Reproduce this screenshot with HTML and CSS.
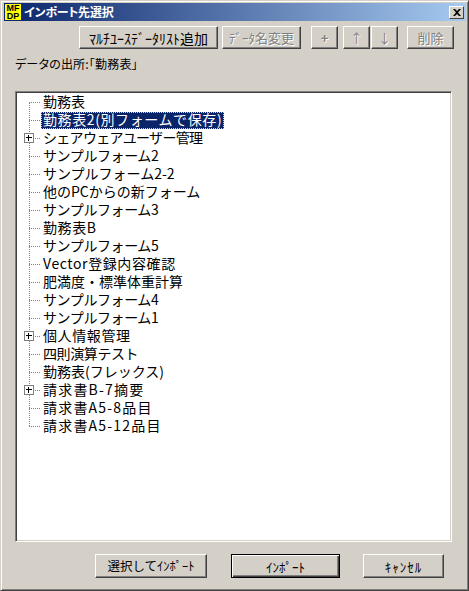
FILE: index.html
```html
<!DOCTYPE html>
<html lang="ja">
  <head>
    <meta charset="UTF-8" />
    <title>インポート先選択</title>
    <link rel="stylesheet" href="styles.css">
  </head>
  <body>
    <div class="window">
      <div class="titlebar">
        <div class="app-icon"><span>MF</span><span>DP</span></div>
        <span class="title">インポート先選択</span>
        <button type="button" class="close">
          <svg width="8" height="7" viewBox="0 0 8 7"><path d="M0 0h2l2 2 2-2h2L5 3.5 8 7H6L4 5 2 7H0l3-3.5z" fill="#000"/></svg>
        </button>
      </div>

      <div class="toolbar">
        <button type="button" class="btn multi">ﾏﾙﾁﾕｰｽﾃﾞｰﾀﾘｽﾄ追加</button>
        <button type="button" class="btn rename" disabled>ﾃﾞｰﾀ名変更</button>
        <button type="button" class="btn plus" disabled>+</button>
        <button type="button" class="btn up" disabled>↑</button>
        <button type="button" class="btn down" disabled>↓</button>
        <button type="button" class="btn remove" disabled>削除</button>
      </div>

      <p class="source">データの出所:「勤務表」</p>

      <ul class="tree">
        <li><span class="branch"></span><span class="label">勤務表</span></li>
        <li><span class="branch"></span><span class="label selected">勤務表2(別フォームで保存)</span></li>
        <li><span class="branch"></span><span class="expander"></span><span class="label tighter">シェアウェアユーザー管理</span></li>
        <li><span class="branch"></span><span class="label tight">サンプルフォーム2</span></li>
        <li><span class="branch"></span><span class="label">サンプルフォーム2-2</span></li>
        <li><span class="branch"></span><span class="label">他のPCからの新フォーム</span></li>
        <li><span class="branch"></span><span class="label tight">サンプルフォーム3</span></li>
        <li><span class="branch"></span><span class="label loose">勤務表B</span></li>
        <li><span class="branch"></span><span class="label tight">サンプルフォーム5</span></li>
        <li><span class="branch"></span><span class="label loose">Vector登録内容確認</span></li>
        <li><span class="branch"></span><span class="label">肥満度・標準体重計算</span></li>
        <li><span class="branch"></span><span class="label tight">サンプルフォーム4</span></li>
        <li><span class="branch"></span><span class="label tight">サンプルフォーム1</span></li>
        <li><span class="branch"></span><span class="expander"></span><span class="label loose">個人情報管理</span></li>
        <li><span class="branch"></span><span class="label tight">四則演算テスト</span></li>
        <li><span class="branch"></span><span class="label">勤務表(フレックス)</span></li>
        <li><span class="branch"></span><span class="expander"></span><span class="label looser">請求書B-7摘要</span></li>
        <li><span class="branch"></span><span class="label looser">請求書A5-8品目</span></li>
        <li><span class="branch"></span><span class="label looser">請求書A5-12品目</span></li>
      </ul>

      <div class="footer">
        <button type="button" class="btn pick">選択してｲﾝﾎﾟｰﾄ</button>
        <button type="button" class="btn import">ｲﾝﾎﾟｰﾄ</button>
        <button type="button" class="btn cancel">ｷｬﾝｾﾙ</button>
      </div>
    </div>
  </body>
</html>
```

FILE: styles.css
```css
* {
  box-sizing: border-box;
}
body {
  margin: 0;
  font-family: "Noto Sans CJK JP", sans-serif;
  font-size: 12px;
  color: #000;
  background-color: #d4d0c8;
}
.window {
  width: 469px;
  height: 591px;
  padding: 2px 3px 3px 3px;
  display: flex;
  flex-direction: column;
  background-color: #d4d0c8;
  border: 1px solid;
  border-color: #d4d0c8 #404040 #404040 #d4d0c8;
  box-shadow: inset 1px 1px 0 #fff, inset -1px -1px 0 #808080;
}
.titlebar {
  height: 18px;
  margin-right: -1px;
  padding: 0 2px 0 1px;
  display: flex;
  align-items: center;
  background: linear-gradient(to right, #0a246a, #a6caf0);
}
.app-icon {
  width: 16px;
  height: 16px;
  display: flex;
  flex-direction: column;
  background-color: #ffff00;
  font-family: "Liberation Sans", sans-serif;
  font-size: 9px;
  font-weight: bold;
  line-height: 8px;
  text-align: center;
}
.title {
  margin-left: 3px;
  color: #fff;
  font-size: 12px;
  font-weight: bold;
  font-feature-settings: "palt";
  letter-spacing: -0.2px;
  line-height: 18px;
}
.close {
  width: 15px;
  height: 13px;
  margin-left: auto;
  padding: 0;
  display: flex;
  justify-content: center;
  align-items: center;
  background-color: #d4d0c8;
  border: 1px solid;
  border-color: #fff #404040 #404040 #fff;
}
.btn {
  padding: 0;
  font-family: inherit;
  font-size: 13px;
  line-height: 1;
  color: #000;
  background-color: #d4d0c8;
  border: 1px solid;
  border-color: #fff #404040 #404040 #fff;
  box-shadow: inset -1px -1px 0 #808080;
}
.btn:disabled {
  color: #808080;
  text-shadow: 1px 1px 0 #fff;
}
.toolbar {
  height: 23px;
  margin-top: 5px;
  margin-left: 75px;
  display: flex;
}
.toolbar .btn {
  height: 23px;
}
.multi {
  width: 139px;
  font-size: 14px;
}
.rename {
  width: 79px;
  margin-left: 4px;
}
.plus {
  width: 27px;
  margin-left: 10px;
  font-weight: bold;
}
.up {
  width: 27px;
  margin-left: 5px;
}
.down {
  width: 27px;
  margin-left: 1px;
}
.remove {
  width: 47px;
  margin-left: 9px;
}
.source {
  margin: 6px 0 0 11px;
  height: 18px;
  line-height: 18px;
  font-size: 12px;
  font-feature-settings: "palt";
  letter-spacing: 0.2px;
}
.tree {
  position: relative;
  width: 437px;
  height: 451px;
  margin: 18px 0 0 11px;
  padding: 1px 0 0 0;
  list-style: none;
  background-color: #fff;
  border: 1px solid;
  border-color: #808080 #fff #fff #808080;
  box-shadow: inset 1px 1px 0 #404040, inset -1px -1px 0 #d4d0c8;
}
.tree::before {
  content: "";
  position: absolute;
  left: 13px;
  top: 10px;
  height: 324px;
  border-left: 1px dotted #808080;
}
.tree li {
  position: relative;
  height: 18px;
  display: flex;
  align-items: center;
}
.branch {
  width: 11px;
  margin-left: 13px;
  border-top: 1px dotted #808080;
}
.label {
  margin-left: 1px;
  padding: 0 2px;
  height: 17px;
  font-size: 14px;
  line-height: 15px;
  white-space: nowrap;
}
.tight {
  letter-spacing: -0.4px;
}
.tighter {
  letter-spacing: -0.7px;
}
.loose {
  letter-spacing: 0.6px;
}
.looser {
  letter-spacing: 1.2px;
}
.selected {
  color: #fff;
  letter-spacing: 0.6px;
  background-color: #0a246a;
  outline: 1px dotted #d4d0c8;
  outline-offset: -1px;
}
.expander {
  position: absolute;
  left: 8px;
  top: 4px;
  width: 10px;
  height: 10px;
  background-color: #fff;
  border: 1px solid #808080;
}
.expander::before {
  content: "";
  position: absolute;
  left: 1px;
  top: 3px;
  width: 6px;
  height: 2px;
  border-top: 1px solid #000;
}
.expander::after {
  content: "";
  position: absolute;
  left: 3px;
  top: 1px;
  height: 6px;
  border-left: 1px solid #000;
}
.footer {
  margin-top: 12px;
  margin-left: 91px;
  display: flex;
}
.footer .btn {
  height: 24px;
}
.pick {
  width: 112px;
  font-size: 12.5px;
}
.import {
  width: 109px;
  margin-left: 24px;
  border: 1px solid #000 !important;
  box-shadow: inset 1px 1px 0 #fff, inset -1px -1px 0 #404040, inset -2px -2px 0 #808080;
}
.cancel {
  width: 81px;
  margin-left: 23px;
  letter-spacing: 1px;
}
```
